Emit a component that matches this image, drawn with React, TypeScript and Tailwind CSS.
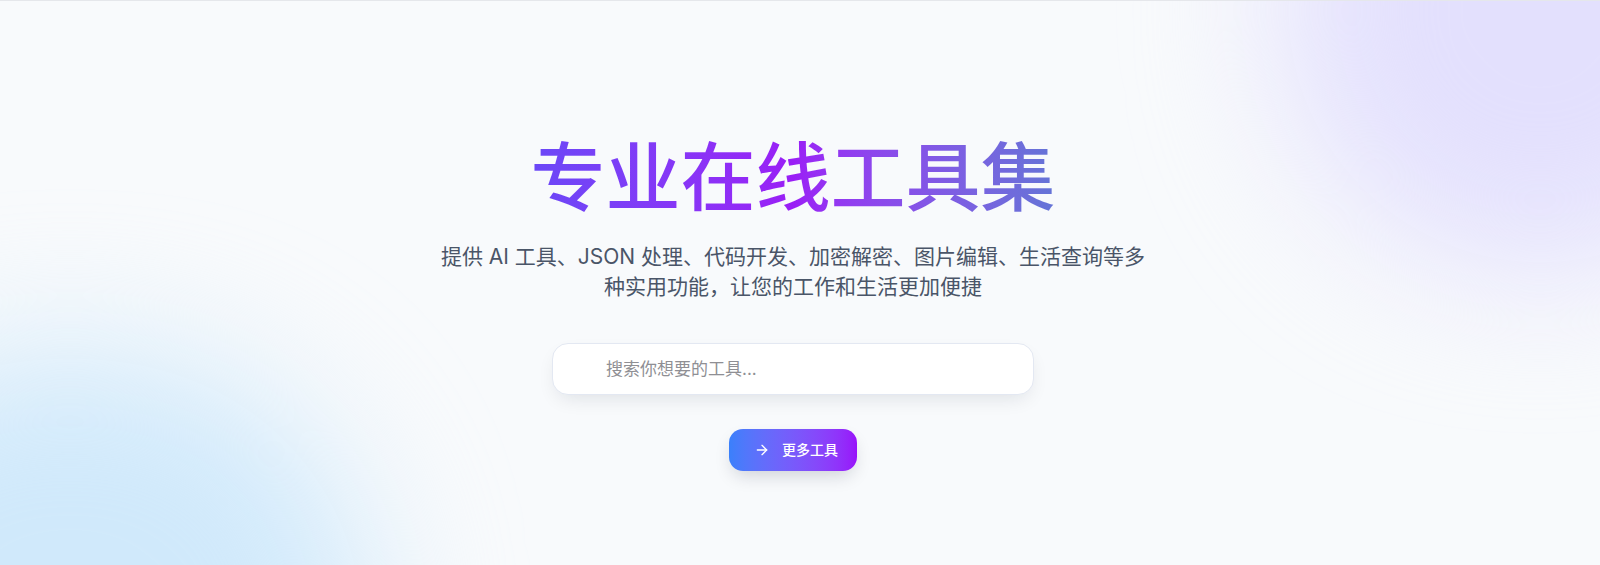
import { ArrowRight } from 'lucide-react'

const font = '"Inter", "Noto Sans CJK SC", sans-serif'

export default function App() {
  return (
    <div
      className="relative h-[565px] overflow-hidden border-t border-[#e5e7eb] bg-[#f8fafc]"
      style={{ fontFamily: font }}
    >
      {/* soft background glows */}
      <div className="pointer-events-none absolute -right-[200px] -top-[250px] h-[520px] w-[520px] rounded-full bg-[#e3e0fd] blur-[70px]" />
      <div className="pointer-events-none absolute -bottom-[330px] -left-[230px] h-[540px] w-[600px] rounded-full bg-[#d0e9fb] blur-[70px]" />

      <div className="relative flex flex-col items-center pr-[14px] pt-[139px]">
        <h1 className="text-[75px] font-medium leading-[76px]">
          <span className="inline-block bg-gradient-to-r from-[#6a48f7] via-[#9a1ef6] to-[#6474d6] bg-clip-text text-transparent">
            专业在线工具集
          </span>
        </h1>

        <p className="mt-[26px] text-center text-[21px] leading-[30px] text-[#4a5568]">
          提供 AI 工具、JSON 处理、代码开发、加密解密、图片编辑、生活查询等多
          <br />
          种实用功能，让您的工作和生活更加便捷
        </p>

        <div className="mt-[41px] w-[482px]">
          <input
            type="text"
            placeholder="搜索你想要的工具..."
            className="h-[52px] w-full rounded-2xl border border-[#e3e8f2] bg-white pl-[53px] pr-4 text-[17px] text-gray-700 shadow-[0_8px_20px_-6px_rgba(15,23,42,0.12)] outline-none placeholder:text-[#8f8f94]"
          />
        </div>

        <button
          type="button"
          className="mt-[34px] flex h-[42px] items-center gap-3 rounded-[14px] bg-gradient-to-r from-[#3a80fb] to-[#9810fa] pl-[25px] pr-[19px] text-sm font-medium text-white shadow-[0_8px_18px_-4px_rgba(15,23,42,0.18)]"
        >
          <ArrowRight size={16} strokeWidth={2} />
          更多工具
        </button>
      </div>
    </div>
  )
}
